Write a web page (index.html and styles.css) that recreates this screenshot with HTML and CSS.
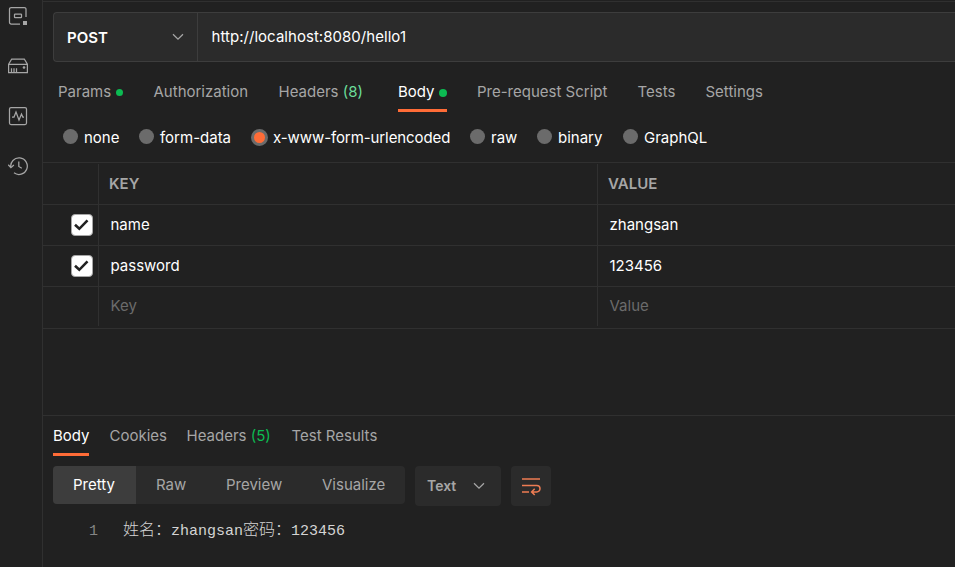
FILE: index.html
```html
<!DOCTYPE html>
<html lang="en">
<head>
<meta charset="utf-8">
<title>POST request</title>
<link rel="stylesheet" href="styles.css">
</head>
<body>
<div class="app">
  <aside class="sidebar">
    <svg width="20" height="20" viewBox="0 0 20 20"><path d="M18 11V3.2a1.7 1.7 0 0 0-1.7-1.7H3.2a1.7 1.7 0 0 0-1.7 1.7v13.1A1.7 1.7 0 0 0 3.2 18H12"/><rect x="6.5" y="8" width="7" height="3.5" rx=".6"/><path class="solid" d="M15 15h4v4h-4z"/></svg>
    <svg width="20" height="20" viewBox="0 0 20 20"><path d="M.6 8.3 3.7 3h12.6l3.1 5.3v8.2H.6zM.6 8.3h18.8M3.5 12.3v4M6 12.3v4M8.5 12.3v4"/><circle class="solid" cx="16" cy="11.5" r="1.3"/></svg>
    <svg width="20" height="20" viewBox="0 0 20 20"><rect x="1.5" y="1.5" width="17" height="17" rx="1.5"/><path d="M4 11h2l2-5 3 8 2.5-6 1.3 3H16"/></svg>
    <svg width="20" height="20" viewBox="0 0 20 20"><path d="M2.8 11.5A8.3 8.3 0 1 1 6 16.8M.3 8.8l2.6 2.8 3-2.6M10.8 5.5v5l3 1.7"/></svg>
  </aside>
  <main class="main">
    <div class="request-bar">
      <div class="method"><span>POST</span><svg width="12" height="8" viewBox="0 0 12 8"><path d="m1 1.2 5 5 5-5"/></svg></div>
      <div class="url">http://localhost:8080/hello1</div>
    </div>
    <nav class="tabs">
      <span class="tab params">Params<i class="dot"></i></span>
      <span class="tab auth">Authorization</span>
      <span class="tab headers">Headers <b class="count">(8)</b></span>
      <span class="tab body active">Body<i class="dot"></i></span>
      <span class="tab script">Pre-request Script</span>
      <span class="tab tests">Tests</span>
      <span class="tab">Settings</span>
    </nav>
    <div class="modes">
      <span class="mode none"><i class="radio"></i>none</span>
      <span class="mode form"><i class="radio"></i>form-data</span>
      <span class="mode encoded"><i class="radio checked"></i>x-www-form-urlencoded</span>
      <span class="mode raw"><i class="radio"></i>raw</span>
      <span class="mode binary"><i class="radio"></i>binary</span>
      <span class="mode"><i class="radio"></i>GraphQL</span>
    </div>
    <div class="table">
      <div class="row head"><div></div><div>KEY</div><div>VALUE</div></div>
      <div class="row"><div><span class="check"><svg width="20" height="20" viewBox="0 0 20 20"><path d="m3 9.8 4.3 4 8.2-8.4"/></svg></span></div><div>name</div><div>zhangsan</div></div>
      <div class="row"><div><span class="check"><svg width="20" height="20" viewBox="0 0 20 20"><path d="m3 9.8 4.3 4 8.2-8.4"/></svg></span></div><div>password</div><div>123456</div></div>
      <div class="row empty"><div></div><div>Key</div><div>Value</div></div>
    </div>
    <section class="response">
      <nav class="res-tabs">
        <span class="res-tab r-body active">Body</span>
        <span class="res-tab r-cookies">Cookies</span>
        <span class="res-tab r-headers">Headers <b class="count">(5)</b></span>
        <span class="res-tab">Test Results</span>
      </nav>
      <div class="toolbar">
        <div class="segments">
          <span class="seg pretty">Pretty</span><span class="seg s-raw">Raw</span><span class="seg preview">Preview</span><span class="seg visualize">Visualize</span>
        </div>
        <div class="format"><span>Text</span><svg width="12" height="8" viewBox="0 0 12 8"><path d="m1 1.2 5 5 5-5"/></svg></div>
        <div class="wrap"><svg width="20" height="20" viewBox="0 0 20 20"><path d="M1 3h18M1 9.5h14.8a3.2 3.2 0 0 1 0 6.4H11M1 16h7M13.7 12.8 10.6 15.9l3.1 3.1"/></svg></div>
      </div>
      <div class="code"><span class="line-no">1</span><span class="line"><span class="cjk">姓名：</span>zhangsan<span class="cjk">密码：</span>123456</span></div>
    </section>
  </main>
</div>
</body>
</html>
```
FILE: styles.css
```css
* { box-sizing: border-box; }
body { margin: 0; background: #212121; color: #fff; font: 15px/20px Inter, "Noto Sans CJK SC", sans-serif; overflow: hidden; }
i { font-style: normal; }
svg { display: block; fill: none; stroke: #a6a6a6; stroke-width: 1.25; flex: none; }
.solid { fill: #a6a6a6; stroke: none; }
.app { display: flex; width: 955px; height: 567px; }
.sidebar { width: 43px; border-right: 1px solid #303030; padding: 6px 0 0 8px; display: flex; flex-direction: column; gap: 30px; flex: none; }
.main { flex: 1; min-width: 0; margin-top: 1px; border-top: 1px solid #303030; }
.request-bar { display: flex; height: 50px; margin: 10px 0 0 10px; border: 1px solid #3d3d3d; border-right: 0; border-radius: 4px 0 0 4px; background: #2b2b2b; }
.method { width: 144px; border-right: 1px solid #3d3d3d; display: flex; align-items: center; justify-content: space-between; padding: 0 13px; font-weight: 600; }
.method span { padding-top: 2px; }
.url { padding: 14px 13.5px; letter-spacing: .04px; }
.tabs { display: flex; height: 50px; padding: 0 0 0 15px; color: #a6a6a6; }
.tab { display: flex; align-items: center; white-space: pre; height: 50px; padding-top: 12px; flex: none; border-bottom: 3px solid transparent; }
.tabs .active { color: #fff; border-color: #ff6c37; }
.dot { width: 7px; height: 7px; border-radius: 50%; background: #0cbb52; margin-left: auto; margin-top: 2px; }
.body .dot { width: 8px; height: 8px; }
.count { font-weight: 400; color: #6bdd9a; }
.params { width: 65px; margin-right: 30.5px; }
.auth { width: 95px; margin-right: 30px; }
.headers { width: 85px; margin-right: 34.5px; }
.body { width: 49px; margin-right: 30px; }
.script { width: 131px; margin-right: 29.5px; }
.tests { width: 38px; margin-right: 30px; }
.modes { display: flex; height: 51px; padding: 1px 0 0 20px; border-bottom: 1px solid #303030; }
.mode { display: flex; align-items: center; gap: 6px; white-space: nowrap; flex: none; padding-top: 1px; }
.radio { width: 15px; height: 15px; border-radius: 50%; background: #6b6b6b; margin-top: -3px; }
.checked { width: 17px; height: 17px; background: #ff6c37; border: 3px solid #6b6b6b; margin-top: -1px; }
.mode.none { width: 76px; }
.form { width: 112px; }
.encoded { width: 219px; gap: 5px; letter-spacing: -.09px; }
.raw { width: 67px; }
.binary { width: 86px; }
.table { border-bottom: 1px solid #303030; padding: 1px 0 2px; }
.row { display: grid; grid-template-columns: 56px 499px 1fr; height: 41px; border-bottom: 1px solid #303030; }
.row > div { display: flex; align-items: center; padding-left: 11.5px; }
.row > div:first-child { padding-left: 28px; }
.row > div:not(:last-child) { border-right: 1px solid #303030; }
.head { color: #a6a6a6; font-weight: 600; }
.head > div { padding-left: 10px; }
.check { width: 22px; height: 22px; border: 1px solid #a6a6a6; border-radius: 4px; background: #fff; }
.check svg { stroke: #212121; stroke-width: 2.6; }
.row.empty { border: 0; color: #6b6b6b; height: 39px; }
.row.empty > div { padding-bottom: 2px; }
.response { margin-top: 86px; border-top: 1px solid #303030; padding-left: 10px; }
.res-tabs { display: flex; height: 40px; color: #a6a6a6; }
.res-tab { padding-top: 10px; border-bottom: 3px solid transparent; white-space: nowrap; flex: none; }
.res-tab.active { color: #fff; border-color: #ff6c37; }
.res-tab .count { color: #0cbb52; }
.r-body { width: 36px; margin-right: 20.5px; }
.r-cookies { width: 57px; margin-right: 20px; }
.r-headers { width: 85px; margin-right: 20px; }
.toolbar { display: flex; gap: 10px; margin-top: 10px; align-items: flex-start; }
.segments { display: flex; height: 38px; width: 352px; background: #2b2b2b; border-radius: 4px; overflow: hidden; color: #a6a6a6; }
.seg { padding: 9px 0 0 20px; }
.pretty { width: 83px; color: #fff; background: #3d3d3d; }
.s-raw { width: 70px; }
.preview { width: 96px; }
.visualize { width: 103px; }
.format { width: 86px; height: 40px; border-radius: 4px; background: #2b2b2b; color: #a6a6a6; font-weight: 600; font-size: 14px; display: flex; align-items: center; justify-content: space-between; padding: 0 16px 0 12px; }
.wrap { width: 40px; height: 40px; border-radius: 4px; background: #2b2b2b; display: grid; place-items: center; }
.wrap svg { stroke: #ee7c53; stroke-width: 1.5; }
.code { display: flex; align-items: baseline; margin-top: 16px; font: 15px/20px "Liberation Mono", "Noto Sans CJK SC", monospace; color: #d4d4d4; white-space: pre; }
.line-no { width: 70px; padding-left: 36px; color: #858585; }
.cjk { font: 300 16px/1px "Noto Sans CJK SC", sans-serif; vertical-align: 0; }
```
